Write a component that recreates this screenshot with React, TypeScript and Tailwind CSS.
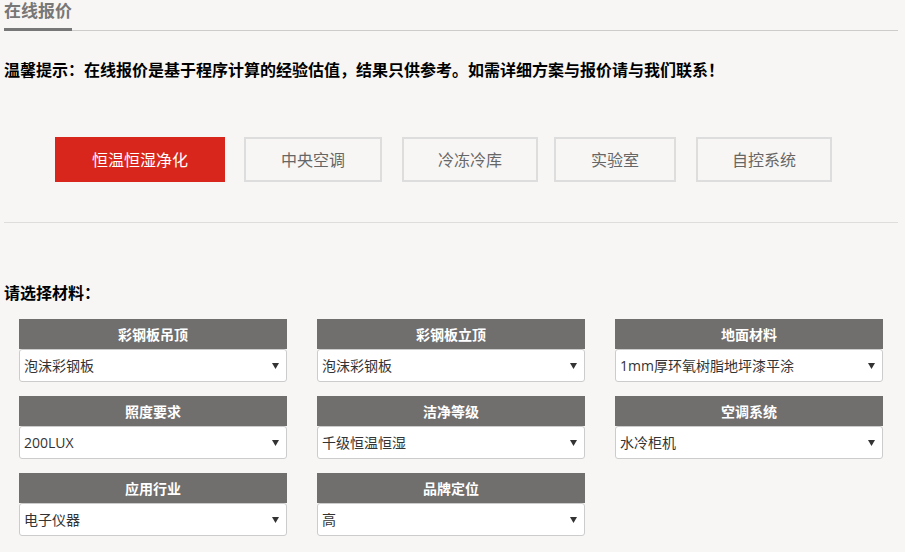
const tabs = [
  { name: '恒温恒湿净化', cls: 'ml-[51px] w-[170px]' },
  { name: '中央空调', cls: 'ml-[19px] w-[138px]' },
  { name: '冷冻冷库', cls: 'ml-[20px] w-[136px]' },
  { name: '实验室', cls: 'ml-[16px] w-[122px]' },
  { name: '自控系统', cls: 'ml-[20px] w-[136px]' },
];

const fields = [
  { label: '彩钢板吊顶', value: '泡沫彩钢板' },
  { label: '彩钢板立顶', value: '泡沫彩钢板' },
  { label: '地面材料', value: '1mm厚环氧树脂地坪漆平涂' },
  { label: '照度要求', value: '200LUX' },
  { label: '洁净等级', value: '千级恒温恒湿' },
  { label: '空调系统', value: '水冷柜机' },
  { label: '应用行业', value: '电子仪器' },
  { label: '品牌定位', value: '高' },
];

// 材料下拉框
function Field({ label, value }: { label: string; value: string }) {
  return (
    <div className="flex flex-col">
      <div className="h-[30px] bg-[#716e6e] text-white text-[14px] font-bold flex items-center justify-center">
        {label}
      </div>
      <div className="h-[33px] bg-white border border-[#cccccc] rounded-[3px] flex items-center justify-between pl-[4px] pr-[7px] text-[14px] text-[#333]">
        <span>{value}</span>
        <svg width="7" height="6" viewBox="0 0 7 6">
          <path d="M0 0 L7 0 L3.5 6 Z" fill="#333" />
        </svg>
      </div>
    </div>
  );
}

export default function App() {
  return (
    <div
      className="w-[905px] h-[552px] overflow-hidden bg-[#f7f6f4] pl-[4px]"
      style={{ fontFamily: '"Open Sans", "Noto Sans CJK SC", sans-serif' }}
    >
      <div className="flex items-end border-b border-[#cccccc] w-[894px]">
        <span className="text-[17px] leading-[22px] font-bold text-[#777] pb-[6px] border-b-[3px] border-[#777] -mb-px">
          在线报价
        </span>
      </div>

      <p className="mt-[29px] text-[16px] leading-[20px] font-bold text-black">
        温馨提示：在线报价是基于程序计算的经验估值，结果只供参考。如需详细方案与报价请与我们联系！
      </p>

      <div className="mt-[57px] flex">
        {tabs.map((t, i) => (
          <div
            key={t.name}
            className={
              t.cls +
              (i === 0
                ? ' h-[45px] flex items-center justify-center bg-[#d9261c] text-white text-[16px]'
                : ' h-[45px] flex items-center justify-center border-2 border-[#dddddd] text-[#666] text-[16px]')
            }
          >
            {t.name}
          </div>
        ))}
      </div>

      <div className="mt-[40px] w-[894px] border-t border-[#dddddd]" />

      <p className="mt-[60px] text-[16px] leading-[20px] font-bold text-black">请选择材料：</p>

      <div className="mt-[16px] ml-[15px] grid grid-cols-[268px_268px_268px] gap-x-[30px] gap-y-[14px]">
        {fields.map((f) => (
          <Field key={f.label} label={f.label} value={f.value} />
        ))}
      </div>
    </div>
  );
}
